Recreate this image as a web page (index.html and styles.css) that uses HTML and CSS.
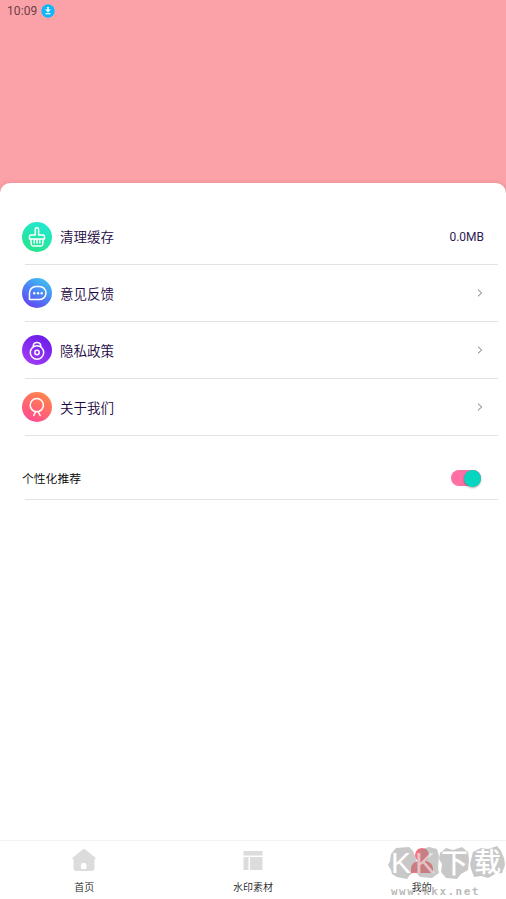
FILE: index.html
```html
<!DOCTYPE html>
<html lang="zh-CN">
<head>
<meta charset="utf-8">
<title>我的</title>
<link rel="stylesheet" href="styles.css">
</head>
<body>
<div class="app">
  <header class="hero">
    <span class="time">10:09</span>
    <svg class="status" viewBox="0 0 14 14"><circle cx="7" cy="7" r="6.700" fill="#10b5fb"/><path d="M6 3h2v2.500h2L7 8.500 4 5.500h2zM4.500 9h5v1.200h-5z" fill="#e8faff"/></svg>
  </header>
  <main class="sheet">
    <div class="row">
      <svg class="icon" viewBox="0 0 30 30"><defs><linearGradient id="g1" x1=".7" y1="0" x2=".3" y2="1"><stop stop-color="#21e8d2"/><stop offset="1" stop-color="#28e58b"/></linearGradient></defs><circle cx="15" cy="15" r="15" fill="url(#g1)"/><path d="M13.200 13V7.500a1.700 1.700 0 0 1 3.400 0V13h4.400a1.500 1.500 0 0 1 1.500 1.500V17h-15v-2.500A1.500 1.500 0 0 1 9 13zM8.800 17l.5 5.500q.2 1.500 1.700 1.500h8q1.500 0 1.700-1.500l.5-5.500M12.200 18v3M15 18v3M17.800 18v3"/></svg>
      <span class="label">清理缓存</span><span class="value">0.0MB</span>
    </div>
    <div class="row">
      <svg class="icon" viewBox="0 0 30 30"><defs><linearGradient id="g2" x1=".8" y1="0" x2=".2" y2="1"><stop stop-color="#3cc5ee"/><stop offset=".5" stop-color="#4c83f6"/><stop offset="1" stop-color="#6540f2"/></linearGradient></defs><circle cx="15" cy="15" r="15" fill="url(#g2)"/><path d="M7.500 21.500V15A6.500 6.500 0 0 1 14 8.500h3.500a6.500 6.500 0 0 1 0 13z"/><g class="dots"><circle cx="12.200" cy="15.300" r="1.200"/><circle cx="16" cy="15.300" r="1.200"/><circle cx="19.700" cy="15.300" r="1.200"/></g></svg>
      <span class="label">意见反馈</span><svg class="arrow" viewBox="0 0 6 8"><path d="M1 .7 4.700 4 1 7.300"/></svg>
    </div>
    <div class="row">
      <svg class="icon" viewBox="0 0 30 30"><defs><linearGradient id="g3" x1=".8" y1="0" x2=".2" y2="1"><stop stop-color="#671be8"/><stop offset="1" stop-color="#a43cf8"/></linearGradient></defs><circle cx="15" cy="15" r="15" fill="url(#g3)"/><circle cx="15" cy="17.500" r="6.700"/><circle cx="15" cy="17.500" r="2.200"/><path d="M11.300 11.500v-.8a3.700 3.300 0 0 1 7.400 0v.8"/></svg>
      <span class="label">隐私政策</span><svg class="arrow" viewBox="0 0 6 8"><path d="M1 .7 4.700 4 1 7.300"/></svg>
    </div>
    <div class="row">
      <svg class="icon" viewBox="0 0 30 30"><defs><linearGradient id="g4" x1=".75" y1="0" x2=".25" y2="1"><stop stop-color="#ff8847"/><stop offset="1" stop-color="#ff4a91"/></linearGradient></defs><circle cx="15" cy="15" r="15" fill="url(#g4)"/><circle cx="14.800" cy="13.200" r="6.600"/><path d="M13.500 20 11.700 23.500M16.300 20l1.900 3.500"/></svg>
      <span class="label">关于我们</span><svg class="arrow" viewBox="0 0 6 8"><path d="M1 .7 4.700 4 1 7.300"/></svg>
    </div>
    <div class="row prefs">
      <span class="small">个性化推荐</span><span class="switch"><i class="thumb"></i></span>
    </div>
  </main>
  <nav class="tabs">
    <div class="tab"><svg viewBox="0 0 26 24"><path fill="#dcdcdc" d="M12 1.300q1-.8 2 0l10.500 8.500q.8 1-.5 1.200h-.5v9q0 3-3 3h-15q-3 0-3-3v-9H2q-1.300-.2-.5-1.200z"/><path fill="#fff" d="M10 21v-3.500a2.700 2.700 0 0 1 5.400 0V21z"/></svg><span>首页</span></div>
    <div class="tab"><svg viewBox="0 0 26 24"><path fill="#dcdcdc" d="M3.500 3h19v4.500h-19zM3.500 9h5v13h-5zM10 9h12.500v13H10z"/></svg><span>水印素材</span></div>
    <div class="tab"><svg viewBox="0 0 26 24"><path fill="#ff6f7c" d="M13 0a7.200 7.200 0 0 1 4 13C21 14 23.500 16 24 20.500v4.500H2v-4.500C2.500 16 5 14 9 13A7.200 7.200 0 0 1 13 0z"/></svg><span>我的</span></div>
    <div class="mark">
      <svg viewBox="0 0 118 34"><g fill="#8c8c8c" fill-opacity=".48"><path d="M3 8 8 2l13-1 4 4 3 8-1 12-5 4-3 4-10-2-5-3-1-4-3-5 2-4z"/><path d="m31 4 10-3 8 2 2 7-1 12 1 5-7 5-12-1-5-6 2-11z"/><path d="m52 7 6-5 7 2 9-3 6 5 1 8-1 10-7 4-4 5-11-1-5-6 1-8-3-5z"/><path d="m85 6 8-4 7 1 9-3 4 5 3 7 1 7-3 8-7 1-7 4-7-2-7 1-3-8-1-5z"/></g><g class="brush"><text x="3" y="27">K</text><text x="27" y="27" class="soft">K</text><text x="53" y="27" class="han">下</text><text x="86" y="26" class="han">载</text></g></svg>
      <span class="site">www.kkx.net</span>
    </div>
  </nav>
</div>
</body>
</html>
```
FILE: styles.css
```css
* { box-sizing: border-box; }
body { margin: 0; background: #fff; font-family: Roboto, "Noto Sans CJK SC", sans-serif; }
.app { height: 899px; display: flex; flex-direction: column; overflow: hidden; }
.hero { height: 193px; flex: none; background: #fba2a8; padding: 3.500px 7px; display: flex; align-items: flex-start; gap: 4px; }
.time { font-size: 12px; line-height: 14px; font-weight: 400; letter-spacing: .1px; color: #6b3f46; width: 30px; white-space: nowrap; }
.status { width: 14px; height: 14px; }
.sheet { position: relative; flex: 1; margin-top: -10px; padding-top: 25.500px; background: #fff; border-radius: 10px 10px 0 0; box-shadow: 0 0 5px rgba(150, 50, 60, .22); }
.row { height: 56.900px; padding: 0 22px 1px; display: flex; align-items: center; background: linear-gradient(#e2e2e2, #e2e2e2) 25px 100% / 473px 1.300px no-repeat; }
.row:first-child { padding-bottom: 0; }
.icon { width: 30px; height: 30px; flex: none; fill: none; stroke: #fff; stroke-width: 1.500; stroke-linecap: round; stroke-linejoin: round; }
.icon > circle:first-of-type { stroke: none; }
.dots { fill: #fff; stroke: none; }
.label { flex: 1; margin-left: 8px; padding-top: 1px; font-size: 13.500px; line-height: 20px; font-weight: 350; color: #1b0843; }
.value { font-size: 12px; padding-top: 1px; color: #2c1c50; }
.arrow { width: 6px; height: 8px; margin-right: 1px; fill: none; stroke: #777389; stroke-width: 1; }
.row.prefs { height: 64.500px; padding-top: 21px; padding-bottom: 1px; justify-content: space-between; }
.small { font-size: 11.800px; line-height: 18px; padding-top: 1px; font-weight: 350; color: #000; }
.switch { width: 30px; height: 16px; margin-right: 3px; border-radius: 8px; background: #ff6fa3; display: flex; align-items: center; justify-content: flex-end; }
.thumb { width: 17px; height: 17px; border-radius: 50%; background: #06d5bf; box-shadow: 0 1px 2px rgba(0, 0, 0, .35); }
.tabs { position: relative; height: 59px; flex: none; display: flex; border-top: 1px solid #f2f2f2; background: #fff; }
.tab { flex: 1; padding-top: 7px; display: flex; flex-direction: column; align-items: center; gap: 8px; font-size: 10px; font-weight: 350; line-height: 15px; color: #222; }
.tab svg { width: 26px; height: 24px; overflow: visible; }
.mark { position: absolute; left: 388px; top: 5px; width: 118px; }
.mark svg { display: block; width: 118px; height: 34px; overflow: visible; }
.brush { fill: #fff; font: 400 30px "Liberation Sans", sans-serif; }
.brush .soft { fill-opacity: .55; }
.brush .han { font-size: 27px; font-family: "Noto Sans CJK SC", sans-serif; font-weight: 500; }
.site { display: block; margin: 6px 0 0 3px; font: bold 11px/12px "DejaVu Sans Mono", "Liberation Mono", monospace; letter-spacing: 1.450px; color: rgba(140, 140, 140, .6); }
```
